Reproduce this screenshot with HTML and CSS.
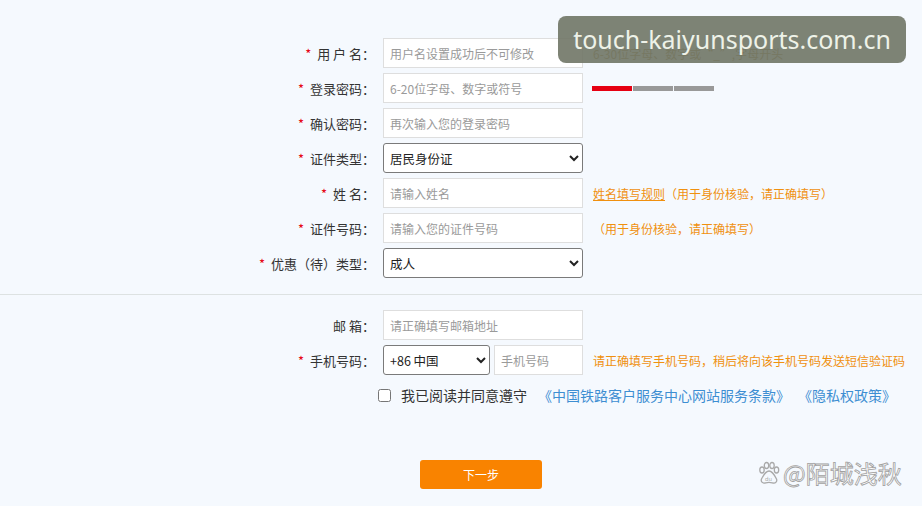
FILE: index.html
```html
<!DOCTYPE html>
<html lang="zh-CN">
<head>
    <meta charset="UTF-8">
    <meta name="viewport" content="width=device-width, initial-scale=1.0">
    <title>注册</title>
    <link rel="stylesheet" href="styles.css">
</head>
<body>
    <!-- 注册表单 -->
    <form class="reg-form">
        <div class="form-row">
            <label class="row-label" for="username"><span class="req">*</span> 用 户 名：</label>
            <input class="field" type="text" id="username" placeholder="用户名设置成功后不可修改">
            <span class="hint hint-dark">6-30位字母、数字或“_”,字母开头</span>
        </div>
        <div class="form-row">
            <label class="row-label" for="pwd"><span class="req">*</span> 登录密码：</label>
            <input class="field" type="password" id="pwd" placeholder="6-20位字母、数字或符号">
            <div class="strength">
                <span class="seg seg-on"></span>
                <span class="seg"></span>
                <span class="seg"></span>
            </div>
        </div>
        <div class="form-row">
            <label class="row-label" for="pwd2"><span class="req">*</span> 确认密码：</label>
            <input class="field" type="password" id="pwd2" placeholder="再次输入您的登录密码">
        </div>
        <div class="form-row">
            <label class="row-label" for="idtype"><span class="req">*</span> 证件类型：</label>
            <select class="field field-select" id="idtype">
                <option>居民身份证</option>
            </select>
        </div>
        <div class="form-row">
            <label class="row-label" for="realname"><span class="req">*</span> 姓 名：</label>
            <input class="field" type="text" id="realname" placeholder="请输入姓名">
            <span class="hint"><a href="#" class="hint-link">姓名填写规则</a>（用于身份核验，请正确填写）</span>
        </div>
        <div class="form-row">
            <label class="row-label" for="idno"><span class="req">*</span> 证件号码：</label>
            <input class="field" type="text" id="idno" placeholder="请输入您的证件号码">
            <span class="hint">（用于身份核验，请正确填写）</span>
        </div>
        <div class="form-row">
            <label class="row-label" for="ptype"><span class="req">*</span> 优惠（待）类型：</label>
            <select class="field field-select" id="ptype">
                <option>成人</option>
            </select>
        </div>

        <div class="divider"></div>

        <div class="form-row">
            <label class="row-label" for="email">邮 箱：</label>
            <input class="field" type="text" id="email" placeholder="请正确填写邮箱地址">
        </div>
        <div class="form-row">
            <label class="row-label" for="mobile"><span class="req">*</span> 手机号码：</label>
            <div class="phone-group">
                <select class="field field-select area" id="area">
                    <option>+86 中国</option>
                </select>
                <input class="field mobile" type="text" id="mobile" placeholder="手机号码">
            </div>
            <span class="hint">请正确填写手机号码，稍后将向该手机号码发送短信验证码</span>
        </div>

        <div class="agree-row">
            <input type="checkbox" id="agree">
            <label for="agree" class="agree-text">我已阅读并同意遵守</label>
            <a href="#" class="agree-link">《中国铁路客户服务中心网站服务条款》</a>
            <a href="#" class="agree-link">《隐私权政策》</a>
        </div>

        <div class="submit-row">
            <button type="button" class="next-btn">下一步</button>
        </div>
    </form>

    <!-- 水印 -->
    <div class="site-mark">touch-kaiyunsports.com.cn</div>
    <div class="author-mark">
        <svg width="24" height="24" viewBox="0 0 24 24" fill="none" stroke="#a9a9a9" stroke-width="1.3">
            <ellipse cx="5" cy="9" rx="2.2" ry="3"/>
            <ellipse cx="9.5" cy="4.5" rx="2.2" ry="3"/>
            <ellipse cx="15" cy="4.5" rx="2.2" ry="3"/>
            <ellipse cx="19.5" cy="9" rx="2.2" ry="3"/>
            <path d="M12 10c-3 0-6 5-7.5 8-1 2.5 1 4.5 3.5 4 2-.4 2.8-.6 4-.6s2 .2 4 .6c2.5.5 4.5-1.5 3.5-4C18 15 15 10 12 10z"/>
            <text x="8" y="19.5" font-size="5.5" fill="#a9a9a9" stroke="none" font-family="DejaVu Sans, sans-serif">du</text>
        </svg>
        <span>@陌城浅秋</span>
    </div>
</body>
</html>
```

FILE: styles.css
```css
body {
    margin: 0;
    background-color: #f5f9fe;
    color: #333;
    font-family: "Noto Sans CJK SC", "Noto Sans", sans-serif;
    font-size: 13px;
    width: 922px;
    height: 506px;
    overflow: hidden;
    position: relative;
}

.reg-form {
    padding-top: 38px;
}

.form-row {
    display: grid;
    grid-template-columns: 375px 200px 1fr;
    column-gap: 8px;
    align-items: center;
    height: 30px;
    margin-bottom: 5px;
}

.row-label {
    text-align: right;
    font-size: 13px;
    color: #333;
    white-space: nowrap;
}

.req {
    color: #e60012;
    margin-right: 3px;
}

.field {
    box-sizing: border-box;
    height: 30px;
    width: 200px;
    border: 1px solid #dedede;
    background-color: #fff;
    padding: 0 6px;
    font-family: inherit;
    font-size: 12px;
    color: #333;
    outline: none;
}

.field::placeholder {
    color: #9a9a9a;
}

.field-select {
    border: 1px solid #7a7a7a;
    border-radius: 3px;
    padding: 0 2px;
    font-size: 12.5px;
    color: #222;
}

.hint {
    margin-left: 2px;
    color: #f0900f;
    font-size: 12px;
    white-space: nowrap;
}

.hint-dark {
    color: #a98a3c;
}

.hint-link {
    color: #f0900f;
    text-decoration: underline;
}

/* 密码强度 */
.strength {
    margin-left: 1px;
    display: flex;
    gap: 1px;
    height: 5px;
}

.seg {
    width: 40px;
    height: 5px;
    background-color: #999;
}

.seg-on {
    background-color: #e60012;
}

.divider {
    margin-top: 16px;
    border-top: 1px solid #dde2e2;
    padding-top: 15px;
}

.phone-group {
    display: flex;
    gap: 4px;
    width: 200px;
}

.field.area {
    width: 107px;
}

.field.mobile {
    width: 89px;
}

.agree-row {
    display: flex;
    align-items: center;
    padding-left: 378px;
    margin-top: 10px;
    height: 20px;
    font-size: 14px;
}

.agree-row input {
    margin: 0 10px 0 0;
    width: 13px;
    height: 13px;
}

.agree-text {
    color: #333;
    margin-right: 11px;
}

.agree-link {
    color: #3d8ed2;
    text-decoration: none;
    margin-right: 8px;
}

.submit-row {
    padding-left: 420px;
    margin-top: 55px;
}

.next-btn {
    width: 122px;
    height: 29px;
    border: none;
    border-radius: 3px;
    background-color: #f98300;
    color: #fff;
    font-family: inherit;
    font-size: 12px;
    cursor: pointer;
}

/* 水印 */
.site-mark {
    position: absolute;
    top: 16px;
    left: 558px;
    width: 348px;
    height: 47px;
    box-sizing: border-box;
    border-radius: 8px;
    background-color: rgba(112, 117, 102, 0.9);
    color: #eef2e8;
    font-family: "Noto Sans", sans-serif;
    font-size: 25px;
    line-height: 47px;
    text-align: center;
}

.author-mark {
    position: absolute;
    left: 757px;
    top: 455px;
    display: flex;
    align-items: center;
    gap: 2px;
    color: #fff;
    font-size: 24px;
    -webkit-text-stroke: 0.8px #a0a0a0;
}
```
